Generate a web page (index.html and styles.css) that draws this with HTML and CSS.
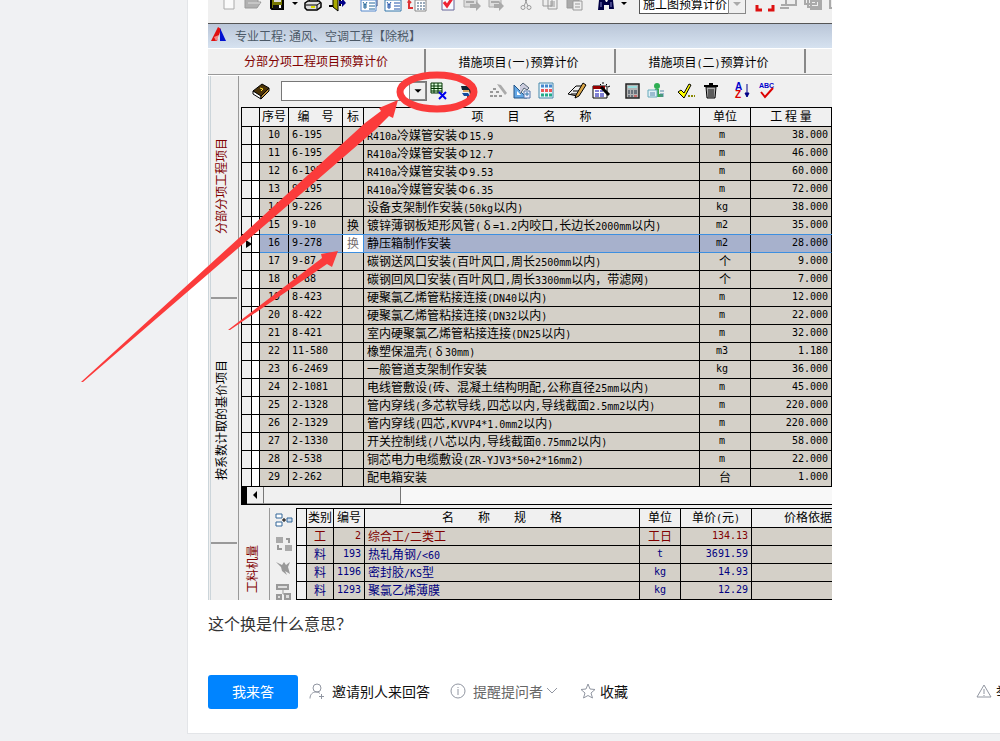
FILE: index.html
```html
<!DOCTYPE html>
<html lang="zh-CN">
<head>
<meta charset="utf-8">
<title>这个换是什么意思？</title>
<link rel="stylesheet" href="styles.css">
</head>
<body>
<div class="page">
<main class="card">
<section class="app" aria-label="预算软件">
  <div class="topbar">
    <div class="group">
      <button class="tool" aria-label="新建"><svg viewBox="0 0 20 18"><path d="M5 1h10v14H5z" fill="#fafafa" stroke="#aaa"/></svg></button>
      <button class="tool" aria-label="打开"><svg viewBox="0 0 20 18"><path d="M2 14V3h6l2 2h5v3h3l-4 6z" fill="#b0b0b0" stroke="#999"/><path d="M5 9h12" stroke="#ddd"/></svg></button>
      <button class="tool" aria-label="保存"><svg viewBox="0 0 20 18"><path d="M4 1h12v14H5l-1-1z" fill="#777700" stroke="#000" stroke-width="2"/><path d="M7 1h7v7H7z" fill="#ddd"/><path d="M6 11h9v4H6z" fill="#111"/><path d="M12 11h2v3h-2z" fill="#fff"/></svg></button>
      <button class="drop" aria-label="保存选项"><svg viewBox="0 0 12 18"><path d="M3 9h6l-3 3z"/></svg></button>
      <button class="tool" aria-label="打印"><svg viewBox="0 0 20 18"><path d="M6 8l2-7h8l-2 7z" fill="#fff" stroke="#000"/><path d="M2 9l3-2h11l2 2v4l-4 3H4l-2-2z" fill="#ddd" stroke="#000" stroke-width="1.500"/><path d="M3 11h11l3-2M14 11v4" stroke="#000" fill="none"/><path d="M8 13h4" stroke="#dd0" stroke-width="2"/></svg></button>
      <button class="tool" aria-label="退出"><svg viewBox="0 0 20 18"><path d="M2 12h5M13 12V2" fill="none" stroke="#000" stroke-width="2"/><path d="M6 1l5 3v13l-5-4z" fill="#aa0" stroke="#000"/><path d="M12 7h3V4l4 5-4 4v-3h-3z" fill="#008"/></svg></button>
    </div>
    <div class="group gap-l">
      <button class="tool" aria-label="计价"><svg viewBox="0 0 20 18"><path d="M6 0h12v12H6z" fill="#e8f1fa" stroke="#347"/><path d="M2 6h15v11H2z" fill="#fff" stroke="#58c"/><path d="M4 8l2 3 2-3M4 11h4M4 13h4M6 11v4M10 9h6M10 12h6M10 15h6" fill="none" stroke="#269"/></svg></button>
      <button class="tool" aria-label="取费"><svg viewBox="0 0 20 18"><path d="M3 0h15v6H3z" fill="#f1bd58" stroke="#a63"/><path d="M2 6h16v11H2z" fill="#fff" stroke="#37a"/><path d="M4 8l2 3 2-3M4 11h4M4 13h4M6 11v4M11 9h6M11 12h6M11 15h6" fill="none" stroke="#25a"/></svg></button>
      <button class="tool" aria-label="调整"><svg viewBox="0 0 20 18"><path d="M8 6h11v11H8z" fill="#fff" stroke="#888"/><path d="M10 9h2m1 0h2m1 0h2M10 12h2m1 0h2m1 0h2M10 15h2m1 0h2m1 0h2" stroke="#9ab" stroke-width="2"/><path d="M2 8v6h4M1 9l1-2 2 2" fill="none" stroke="#d33" stroke-width="2"/><path d="M5 1h10v4H5z" fill="#e98"/></svg></button>
    </div>
    <div class="group gap-m">
      <button class="tool" aria-label="检查"><svg viewBox="0 0 20 18"><path d="M4 2h12v14H4z" fill="#f7faff" stroke="#669"/><path d="M6 8l3 4 6-9" fill="none" stroke="#e23" stroke-width="3"/></svg></button>
      <button class="tool" aria-label="导入"><svg viewBox="0 0 20 18"><path d="M2 1h13v12H2z" fill="#ddd" stroke="#aaa"/><path d="M4 5h8M4 8h8" stroke="#aaa" stroke-width="2"/><path d="M8 10h6V7l5 5-5 5v-3H8z" fill="#aaa"/></svg></button>
      <button class="tool" aria-label="导出"><svg viewBox="0 0 20 18"><path d="M3 1h12v12H3z" fill="#ddd" stroke="#aaa"/><path d="M5 5h8M5 8h8" stroke="#aaa" stroke-width="2"/><path d="M8 10h5V7l5 5-5 5v-3H8z" fill="#aaa"/></svg></button>
    </div>
    <div class="group gap-s">
      <button class="tool" aria-label="剪切"><svg viewBox="0 0 20 18"><path d="M7 1l5 11M13 1L8 12" stroke="#999" fill="none"/><circle cx="7" cy="13.500" r="2" fill="none" stroke="#999"/><circle cx="13" cy="13.500" r="2" fill="none" stroke="#999"/></svg></button>
      <button class="tool" aria-label="复制"><svg viewBox="0 0 20 18"><path d="M3 2h9v10H3zM8 5h9v10H8z" fill="#eee" stroke="#999"/><path d="M10 8h5M10 10h5M10 12h5" stroke="#999"/></svg></button>
      <button class="tool" aria-label="粘贴"><svg viewBox="0 0 20 18"><path d="M3 1h12v13H3z" fill="#aaa" stroke="#999"/><path d="M9 7h9v9H9z" fill="#eee" stroke="#999"/><path d="M11 10h5M11 13h5" stroke="#999"/></svg></button>
    </div>
    <div class="group gap-l">
      <button class="tool" aria-label="查找"><svg viewBox="0 0 20 18"><path d="M5 1h3v5H5zM12 1h3v5h-3zM3 6h6l1 2h1l1-2h5l1 9h-5v-4h-5v5H2z" fill="#004"/><path d="M5 8v5M15 8v5" stroke="#88c"/></svg></button>
      <button class="drop" aria-label="查找选项"><svg viewBox="0 0 12 18"><path d="M3 9h6l-3 3z"/></svg></button>
    </div>
    <select class="mode" aria-label="计价方式"><option>施工图预算计价</option></select>
    <button class="mode-arrow" aria-label="展开"><svg viewBox="0 0 12 18"><path d="M2 7h8l-4 4z" fill="#aaa"/></svg></button>
    <div class="group gap-m">
      <button class="tool" aria-label="全屏"><svg viewBox="0 0 20 18"><path d="M2 6V1h5M13 1h5v5M2 11v5h5M13 16h5v-5" fill="none" stroke="#d11" stroke-width="3"/></svg></button>
      <button class="tool" aria-label="窗口"><svg viewBox="0 0 20 18"><path d="M7 2h10v9H7z" fill="#eee" stroke="#aaa" stroke-width="2"/><path d="M1 14h9M2 11h6" stroke="#aaa" stroke-width="2"/></svg></button>
      <button class="tool" aria-label="层叠"><svg viewBox="0 0 20 18"><path d="M2 1h11v9H2zM5 4h11v9H5zM8 7h10v8H8z" fill="#eee" stroke="#aaa" stroke-width="2"/></svg></button>
      <button class="tool" aria-label="平铺"><svg viewBox="0 0 20 18"><path d="M3 3h12v11H3z" fill="#eee" stroke="#aaa" stroke-width="2"/></svg></button>
    </div>
  </div>
  <div class="titlebar">
    <svg class="logo" viewBox="0 0 16 16"><path d="M7 0l3 2-4 12H0z" fill="#e01010"/><path d="M9 1l6 13H9z" fill="#0010d0"/><path d="M3 10l5-2v3l-3 3z" fill="#fff" opacity=".5"/></svg>
    <span>专业工程: 通风、空调工程【除税】</span>
  </div>
  <div class="tabs">
    <button class="tab tab-first active">分部分项工程项目预算计价</button>
    <button class="tab">措施项目<span class="l">(</span>一<span class="l">)</span>预算计价</button>
    <button class="tab">措施项目<span class="l">(</span>二<span class="l">)</span>预算计价</button>
  </div>
  <div class="workspace">
    <div class="rail">
      <button class="vtab vtab-a active"><span class="vert">分部分项工程项目</span></button>
      <button class="vtab vtab-b"><span class="vert">按系数计取的基价项目</span></button>
    </div>
    <div class="content">
      <div class="toolbar">
        <button class="tool" aria-label="定额"><svg viewBox="0 0 20 18"><path d="M2 9l9-7 7 4-8 9z" fill="#4a3208" stroke="#000"/><path d="M2 9v3l8 5v-3z" fill="#fff" stroke="#000"/><path d="M10 14l8-8v3l-8 8z" fill="#b98b36" stroke="#000"/><path d="M9 6l3 1-2 2" fill="none" stroke="#fd3"/></svg></button>
        <div class="combo"><input type="text" aria-label="定额编号"><button aria-label="展开"><svg viewBox="0 0 12 18"><path d="M2 7h8l-4 4z"/></svg></button></div>
        <button class="tool" aria-label="删除行"><svg viewBox="0 0 20 18"><path d="M2 1h11v10H2z" fill="#dfd" stroke="#030"/><path d="M2 4h11M2 6.500h11M2 9h11M5 1v10M9 1v10" stroke="#030"/><path d="M10 10l7 7M17 10l-7 7" stroke="#00e" stroke-width="2"/></svg></button>
        <button class="tool gap-xs" aria-label="换算"><svg viewBox="0 0 20 18"><path d="M4 4h6l4 2v2H5z" fill="#123"/><path d="M6 8h6v2H6z" fill="#d9a860"/><path d="M5 11h6l2 3H7z" fill="#124a9c"/><path d="M12 8l4-1v3l-3 3z" fill="#111"/><path d="M10 14h4v2h-4z" fill="#a22"/></svg></button>
        <button class="tool gap-m" aria-label="工具"><svg viewBox="0 0 20 18"><path d="M9 2l4 1 6 8-2 2-6-8z" fill="#aaa"/><path d="M2 14h3m1 0h3M2 10h3m3 0h3M5 7h3M11 14h3" stroke="#999" stroke-width="2"/></svg></button>
        <button class="tool" aria-label="设置"><svg viewBox="0 0 20 18"><path d="M2 3v13h13z" fill="#64a7e5" stroke="#258"/><path d="M5 9v4h4z" fill="#fff"/><path d="M8 4l3-3 6 5-2 2-3-2-4 6" fill="#ccd" stroke="#567"/><path d="M12 9h6v7h-6z" fill="#eef" stroke="#57a"/><path d="M13 12h4M15 10v4" stroke="#37a"/></svg></button>
        <button class="tool" aria-label="表格"><svg viewBox="0 0 20 18"><path d="M3 1h14v15H3z" fill="#eef6ff" stroke="#48a"/><path d="M5 4h3m1 0h3m1 0h3" stroke="#48c" stroke-width="3"/><path d="M5 8.500h3m1 0h3m1 0h3" stroke="#e55" stroke-width="3"/><path d="M5 13h3m1 0h3m1 0h3" stroke="#2a8" stroke-width="3"/></svg></button>
        <button class="tool gap-m" aria-label="编辑"><svg viewBox="0 0 20 18"><path d="M1 12l8-8h8l-7 10z" fill="#eee" stroke="#000"/><path d="M4 12h6M6 9h6" stroke="#000"/><path d="M9 13l7-12 3 2-7 11-4 2z" fill="#dba647" stroke="#000"/></svg></button>
        <button class="tool" aria-label="批量"><svg viewBox="0 0 20 18"><path d="M2 4h14v12H2z" fill="#fff" stroke="#000"/><path d="M2 4h12v3H2z" fill="#900"/><path d="M4 9h4m1 0h3M4 12h4m1 0h4M4 14h4m1 0h4" stroke="#00a"/><path d="M10 5l8 8" stroke="#000" stroke-width="3"/><path d="M9 2l1 1M12 0v2M15 2l1 1M17 5l2-1" stroke="#000"/></svg></button>
        <button class="tool gap-m" aria-label="计算器"><svg viewBox="0 0 20 18"><path d="M4 2h13v14H4z" fill="#b4b4b4" stroke="#222" stroke-width="1.500"/><path d="M6 4h9v2H6z" fill="#9dd"/><path d="M6 9h2m1 0h2m1 0h3M6 11h2m1 0h2m1 0h3M6 14h2m1 0h2" stroke="#234"/><path d="M12 14h3" stroke="#d22"/></svg></button>
        <button class="tool" aria-label="用户"><svg viewBox="0 0 20 18"><circle cx="11" cy="4" r="3" fill="#2eae53"/><path d="M9 7h4v5h4v3H7z" fill="#39a94f"/><path d="M2 8h9v7H2z" fill="#e1f0f7" stroke="#6ab"/><path d="M4 11h5M4 13h5M14 9h4M14 12h4M14 14h4" stroke="#58a"/></svg></button>
        <button class="tool gap-s" aria-label="校验"><svg viewBox="0 0 20 18"><path d="M2 10l3-2 3 3 5-9 2 1-7 13z" fill="#ff0" stroke="#000"/><path d="M12 14h2m1 0h2m1 0h1" stroke="#880" stroke-width="2"/></svg></button>
        <button class="tool" aria-label="删除"><svg viewBox="0 0 20 18"><path d="M6 5h10l-1 11H7z" fill="#aaa" stroke="#000"/><path d="M4 4h14M9 2h4" stroke="#000" stroke-width="2"/><path d="M9 7v8M11 7v8M13 7v8" stroke="#111"/></svg></button>
        <button class="tool gap-l" aria-label="排序"><svg viewBox="0 0 20 18"><text x="3" y="8" class="glyph az" fill="#00c">A</text><text x="3" y="16" class="glyph az" fill="#d00">Z</text><path d="M15 2v12M13 11l2 4 2-4z" fill="#008" stroke="#008"/></svg></button>
        <button class="tool" aria-label="拼写"><svg viewBox="0 0 20 18"><text x="3" y="6" class="glyph abc" fill="#00c">ABC</text><path d="M5 10l4 5 8-9" fill="none" stroke="#d00" stroke-width="2"/></svg></button>
      </div>
      <table class="grid items">
        <colgroup><col class="c10"><col class="c8"><col class="c29"><col class="c54"><col class="c21"><col><col class="c51"><col class="c81"></colgroup>
        <thead><tr><th colspan="2"></th><th>序号</th><th>编&emsp;号</th><th>标</th><th>项&emsp;&emsp;目&emsp;&emsp;名&emsp;&emsp;称</th><th>单位</th><th>工 程 量</th></tr></thead>
        <tbody>
        <tr><td></td><td></td><td>10</td><td>6-195</td><td></td><td><span class="l">R410a</span>冷媒管安装<span class="w">Φ</span><span class="l">15.9</span></td><td>m</td><td>38.000</td></tr>
        <tr><td></td><td></td><td>11</td><td>6-195</td><td></td><td><span class="l">R410a</span>冷媒管安装<span class="w">Φ</span><span class="l">12.7</span></td><td>m</td><td>46.000</td></tr>
        <tr><td></td><td></td><td>12</td><td>6-195</td><td></td><td><span class="l">R410a</span>冷媒管安装<span class="w">Φ</span><span class="l">9.53</span></td><td>m</td><td>60.000</td></tr>
        <tr><td></td><td></td><td>13</td><td>9-195</td><td></td><td><span class="l">R410a</span>冷媒管安装<span class="w">Φ</span><span class="l">6.35</span></td><td>m</td><td>72.000</td></tr>
        <tr><td></td><td></td><td>14</td><td>9-226</td><td></td><td>设备支架制作安装<span class="l">(50kg</span>以内<span class="l">)</span></td><td>kg</td><td>38.000</td></tr>
        <tr><td></td><td></td><td>15</td><td>9-10</td><td>换</td><td>镀锌薄钢板矩形风管<span class="l">(</span><span class="w">δ</span><span class="l">=1.2</span>内咬口<span class="l">,</span>长边长<span class="l">2000mm</span>以内<span class="l">)</span></td><td>m2</td><td>35.000</td></tr>
        <tr class="selected"><td><svg class="marker" viewBox="0 0 6 8"><path d="M0 0l6 4-6 4z"/></svg></td><td></td><td>16</td><td>9-278</td><td>换</td><td>静压箱制作安装</td><td>m2</td><td>28.000</td></tr>
        <tr><td></td><td></td><td>17</td><td>9-87</td><td></td><td>碳钢送风口安装<span class="l">(</span>百叶风口<span class="l">,</span>周长<span class="l">2500mm</span>以内<span class="l">)</span></td><td class="cjk">个</td><td>9.000</td></tr>
        <tr><td></td><td></td><td>18</td><td>9-88</td><td></td><td>碳钢回风口安装<span class="l">(</span>百叶风口<span class="l">,</span>周长<span class="l">3300mm</span>以内，带滤网<span class="l">)</span></td><td class="cjk">个</td><td>7.000</td></tr>
        <tr><td></td><td></td><td>19</td><td>8-423</td><td></td><td>硬聚氯乙烯管粘接连接<span class="l">(DN40</span>以内<span class="l">)</span></td><td>m</td><td>12.000</td></tr>
        <tr><td></td><td></td><td>20</td><td>8-422</td><td></td><td>硬聚氯乙烯管粘接连接<span class="l">(DN32</span>以内<span class="l">)</span></td><td>m</td><td>22.000</td></tr>
        <tr><td></td><td></td><td>21</td><td>8-421</td><td></td><td>室内硬聚氯乙烯管粘接连接<span class="l">(DN25</span>以内<span class="l">)</span></td><td>m</td><td>32.000</td></tr>
        <tr><td></td><td></td><td>22</td><td>11-580</td><td></td><td>橡塑保温壳<span class="l">(</span><span class="w">δ</span><span class="l">30mm)</span></td><td>m3</td><td>1.180</td></tr>
        <tr><td></td><td></td><td>23</td><td>6-2469</td><td></td><td>一般管道支架制作安装</td><td>kg</td><td>36.000</td></tr>
        <tr><td></td><td></td><td>24</td><td>2-1081</td><td></td><td>电线管敷设<span class="l">(</span>砖、混凝土结构明配<span class="l">,</span>公称直径<span class="l">25mm</span>以内<span class="l">)</span></td><td>m</td><td>45.000</td></tr>
        <tr><td></td><td></td><td>25</td><td>2-1328</td><td></td><td>管内穿线<span class="l">(</span>多芯软导线<span class="l">,</span>四芯以内<span class="l">,</span>导线截面<span class="l">2.5mm2</span>以内<span class="l">)</span></td><td>m</td><td>220.000</td></tr>
        <tr><td></td><td></td><td>26</td><td>2-1329</td><td></td><td>管内穿线<span class="l">(</span>四芯<span class="l">,KVVP4*1.0mm2</span>以内<span class="l">)</span></td><td>m</td><td>220.000</td></tr>
        <tr><td></td><td></td><td>27</td><td>2-1330</td><td></td><td>开关控制线<span class="l">(</span>八芯以内<span class="l">,</span>导线截面<span class="l">0.75mm2</span>以内<span class="l">)</span></td><td>m</td><td>58.000</td></tr>
        <tr><td></td><td></td><td>28</td><td>2-538</td><td></td><td>铜芯电力电缆敷设<span class="l">(ZR-YJV3*50+2*16mm2)</span></td><td>m</td><td>22.000</td></tr>
        <tr><td></td><td></td><td>29</td><td>2-262</td><td></td><td>配电箱安装</td><td class="cjk">台</td><td>1.000</td></tr>
        </tbody>
      </table>
      <div class="scroll"><button class="scroll-left" aria-label="向左滚动"><svg viewBox="0 0 6 8"><path d="M5 0v8L1 4z"/></svg></button><div class="thumb"></div></div>
      <div class="lower">
        <div class="lower-tab"><span class="vert">工料机量</span></div>
        <div class="lower-tools">
          <button aria-label="插入"><svg viewBox="0 0 18 16"><path d="M1 2h6v4H1zM1 10h6v4H1z" fill="#fff" stroke="#369"/><path d="M7 8h4M9 6v4" stroke="#000"/><path d="M12 6h5v4h-5z" fill="#cde" stroke="#369"/></svg></button>
          <button aria-label="替换"><svg viewBox="0 0 18 16"><path d="M1 1h7v6H1zM10 9h7v6h-7z" fill="#aaa"/><path d="M11 3h3v4M3 9v4h4" fill="none" stroke="#999" stroke-width="2"/></svg></button>
          <button aria-label="移除"><svg viewBox="0 0 18 16"><path d="M1 2l6 3 2-3 2 3 4-3-2 5 2 7-5-3 2 4-5-4-1-4z" fill="#999"/></svg></button>
          <button aria-label="层级"><svg viewBox="0 0 18 16"><path d="M2 1h11v4H2zM2 11h4v4H2zM10 10h5v5h-5z" fill="#ddd" stroke="#999" stroke-width="2"/><path d="M8 6v4h3" fill="none" stroke="#999"/></svg></button>
        </div>
        <table class="grid parts">
          <colgroup><col class="c10"><col class="c27"><col class="c31"><col><col class="c41"><col class="c71"><col class="c80"></colgroup>
          <thead><tr><th></th><th>类别</th><th>编号</th><th>名&emsp;&emsp;称&emsp;&emsp;规&emsp;&emsp;格</th><th>单位</th><th>单价<span class="l">(</span>元<span class="l">)</span></th><th>价格依据</th></tr></thead>
          <tbody>
          <tr class="labor"><td></td><td>工</td><td>2</td><td>综合工<span class="l">/</span>二类工</td><td class="cjk">工日</td><td>134.13</td><td></td></tr>
          <tr><td></td><td>料</td><td>193</td><td>热轧角钢<span class="l">/&lt;60</span></td><td>t</td><td>3691.59</td><td></td></tr>
          <tr><td></td><td>料</td><td>1196</td><td>密封胶<span class="l">/KS</span>型</td><td>kg</td><td>14.93</td><td></td></tr>
          <tr><td></td><td>料</td><td>1293</td><td>聚氯乙烯薄膜</td><td>kg</td><td>12.29</td><td></td></tr>
          </tbody>
        </table>
      </div>
    </div>
  </div>
</section>
<p class="question">这个换是什么意思？</p>
<div class="actions">
  <button class="answer">我来答</button>
  <a class="action invite" href="#"><svg viewBox="0 0 16 16"><circle cx="8" cy="5" r="4"/><path d="M1 15.500c0-4 2.500-6.500 6-6.500 1.500 0 3 .5 4 1.500M10 13.500h5M12.500 11v5"/></svg>邀请别人来回答</a>
  <button class="action remind"><svg viewBox="0 0 16 16"><circle cx="8" cy="8" r="7"/><path d="M8 6v6M8 4v1"/></svg>提醒提问者<svg class="chevron" viewBox="0 0 10 16"><path d="M0 5l5 5 5-5"/></svg></button>
  <button class="action favorite"><svg viewBox="0 0 16 16"><path d="M8 1l2 5 5 .5-4 3.500 1.500 5L8 12.500 3.500 15 5 10 1 6.500 6 6z"/></svg>收藏</button>
  <a class="action report" href="#"><svg viewBox="0 0 16 16"><path d="M8 2L1 14h14zM8 6v5M8 12v1"/></svg>举报</a>
</div>
</main>
<svg class="marks" viewBox="0 0 500 400" aria-hidden="true"><ellipse cx="437" cy="92" rx="37" ry="17" fill="none" stroke="#fb3b3b" stroke-width="7"/><path d="M81 382L365 123l16-12-2-3 19-8-5 18-4-2-14 14L83 382zM228 330l94-72-1-4 17-3-6 16-5-3-97 66z" fill="#fb3b3b"/></svg>
</div>
</body>
</html>
```
FILE: styles.css
```css
* { box-sizing: border-box; }
body {
  margin: 0;
  background: #f0f1f3;
  font-family: "Noto Sans CJK SC", sans-serif;
  overflow-x: hidden;
}
button, input, select {
  font: inherit;
  color: inherit;
  margin: 0;
  padding: 0;
  border: 0;
  border-radius: 0;
  background: none;
}
a { color: inherit; text-decoration: none; }
.page {
  position: relative;
  min-width: 1045px;
  padding: 0 0 8px 187px;
}
.marks {
  position: absolute;
  left: 0;
  top: 0;
  width: 500px;
  height: 400px;
  pointer-events: none;
}
.card {
  background: #fff;
  border: 1px solid #e3e5e8;
  border-top: 0;
  padding: 0 20px 24px;
}

/* Application window */
.app {
  max-width: 624px;
  background: #f0f0f0;
  font-size: 12px;
  line-height: 17px;
  color: #000;
  overflow: hidden;
}
.l {
  font-family: "DejaVu Sans Mono", monospace;
  font-size: 10px;
  line-height: 1;
}
.w {
  display: inline-block;
  width: 12px;
  line-height: 1;
  text-align: center;
}
.topbar {
  display: flex;
  align-items: flex-start;
  height: 24px;
  padding-left: 9px;
  border-bottom: 1px solid #555;
  overflow: hidden;
}
.group { display: flex; flex: none; }
.tool, .drop {
  display: flex;
  flex: none;
  justify-content: center;
  align-items: center;
  width: 24px;
  height: 18px;
}
.drop { width: 12px; }
.tool svg { width: 20px; height: 18px; }
.drop svg { width: 12px; height: 18px; }
.topbar .tool { margin-top: -6px; }
.topbar .drop { margin-top: -7px; }
.gap-xs { margin-left: 4px; }
.gap-s { margin-left: 6px; }
.gap-m { margin-left: 7px; }
.gap-l { margin-left: 8px; }
.mode {
  appearance: none;
  width: 90px;
  height: 20px;
  margin: -6px 0 0 9px;
  padding: 0 0 2px 3px;
  background: #fff;
  border: 1px solid #555;
  border-right: 0;
  line-height: 17px;
}
.mode-arrow {
  flex: none;
  width: 18px;
  height: 20px;
  margin-top: -6px;
  border: 1px solid #888;
}
.mode-arrow svg { display: block; width: 12px; height: 18px; margin: 0 auto; }
.titlebar {
  display: flex;
  align-items: center;
  height: 24px;
  gap: 8px;
  padding: 0 0 2px 3px;
  background: linear-gradient(#bac6d8, #d6e2f0);
  color: #4c5967;
}
.logo { width: 16px; height: 16px; }
.tabs {
  display: flex;
  height: 28px;
  padding-bottom: 1px;
  border-top: 1px solid #fff;
  border-bottom: 1px solid #fff;
  box-shadow: inset 0 -1px #999;
}
.tab {
  width: 190px;
  height: 24px;
  border-right: 2px solid #888;
  padding: 1px 3px 0 0;
}
.tab-first { width: 218px; padding: 0 0 2px; }
.active { color: #800000; }
.workspace { display: flex; }
.rail {
  flex: none;
  width: 31px;
  border-left: 3px double #ccd5da;
  border-right: 1px solid #999;
}
.vtab {
  display: flex;
  align-items: center;
  justify-content: center;
  width: 26px;
  padding-right: 8px;
  border-bottom: 2px solid #999;
}
.vtab-a { height: 223px; }
.vtab-b { height: 245px; }
.vert {
  writing-mode: vertical-rl;
  text-orientation: sideways;
  transform: rotate(180deg);
  white-space: nowrap;
}
.content { flex: 1; min-width: 0; }
.toolbar {
  display: flex;
  align-items: center;
  height: 31px;
  padding: 0 0 2px 10px;
}
.combo {
  display: flex;
  width: 146px;
  height: 20px;
  margin: 0 0 0 8px;
  background: #fff;
  border: 1px solid #777;
}
.combo input { flex: 1; min-width: 0; }
.combo button {
  width: 17px;
  background: #f0f0f0;
  border: 1px solid #888;
}
.combo svg { display: block; width: 12px; height: 16px; margin: 0 auto; }
.glyph { font-family: "Liberation Sans", sans-serif; font-weight: bold; }
.az { font-size: 10px; }
.abc { font-size: 7px; }

/* Data grids */
.grid {
  table-layout: fixed;
  border-spacing: 0;
  border-top: 1px solid #000;
  border-left: 1px solid #000;
  white-space: nowrap;
}
.items { width: calc(100% - 2px); margin-left: 2px; }
.grid th, .grid td {
  padding: 0 0 2px;
  border-right: 1px solid #000;
  border-bottom: 1px solid #000;
  overflow: hidden;
  text-align: center;
}
.grid th {
  height: 19px;
  background: #f0f0f0;
  font-weight: normal;
  line-height: 16px;
}
.grid td {
  height: 18px;
  background: #d4d0c8;
  line-height: 15px;
}
.c8 { width: 8px; }
.c10 { width: 10px; }
.c21 { width: 21px; }
.c27 { width: 27px; }
.c29 { width: 29px; }
.c31 { width: 31px; }
.c41 { width: 41px; }
.c51 { width: 51px; }
.c54 { width: 54px; }
.c71 { width: 71px; }
.c80 { width: 80px; }
.c81 { width: 81px; }
.grid td:first-child { background: #f0f0f0; }
.items td:nth-child(2) { background: #fff; }
.items td:nth-child(3), .items td:nth-child(4), .items td:nth-child(7), .items td:nth-child(8),
.parts td:nth-child(3), .parts td:nth-child(5), .parts td:nth-child(6) {
  font-family: "DejaVu Sans Mono", monospace;
  font-size: 10px;
}
.items td:nth-child(7) { padding-right: 6px; }
.items td:nth-child(4) { text-align: left; padding-left: 3px; }
.items td:nth-child(6), .parts td:nth-child(4) { text-align: left; padding-left: 3px; }
.items td:nth-child(8), .parts td:nth-child(6) { text-align: right; padding-right: 3px; }
.parts td:nth-child(3) { text-align: right; padding-right: 3px; }
.grid td.cjk.cjk.cjk { font-family: "Noto Sans CJK SC", sans-serif; font-size: 12px; padding-right: 0; }
.items .selected td:nth-child(n+3) {
  background: #a7b1cc;
  border-bottom-color: #3d8fe0;
  box-shadow: 0 -1px #3d8fe0;
}
.items .selected td { overflow: visible; }
.items .selected td:nth-child(5) {
  background: #fff;
  border-right-color: #3d8fe0;
  color: #776f70;
}
.marker { display: block; width: 6px; height: 8px; margin: 2px 0 0 4px; }
.scroll {
  display: flex;
  height: 18px;
  margin-left: 2px;
  border-left: 6px solid #000;
  border-bottom: 1px solid #000;
  background: #f8f8f8;
}
.scroll-left, .thumb {
  background: #f0f0f0;
  border-right: 1px solid #777;
  border-bottom: 1px solid #999;
}
.scroll-left { width: 17px; }
.scroll-left svg { display: block; width: 6px; height: 8px; margin: 0 auto; }
.thumb { width: 137px; }
.lower {
  display: flex;
  padding-top: 3px;
}
.lower-tab {
  display: flex;
  align-items: flex-end;
  justify-content: center;
  width: 31px;
  padding: 0 6px 7px 0;
  border-right: 1px solid #999;
  color: #800000;
}
.lower-tools {
  display: flex;
  flex-direction: column;
  gap: 8px;
  width: 26px;
  padding: 4px 0 0 5px;
}
.lower-tools button, .lower-tools svg { display: block; width: 18px; height: 16px; }
.parts { flex: 1; width: 0; }
.parts td { color: #000080; }
.parts .labor td { color: #800000; }
.parts th:last-child { text-align: right; }
.parts th:last-child, .parts td:last-child { border-right: 0; }

/* Question and actions */
.question {
  margin: 11px 0 40px;
  font-size: 16px;
  line-height: 24px;
  color: #333;
}
.actions {
  display: flex;
  align-items: center;
  font-size: 14px;
  line-height: 20px;
  color: #111;
}
.answer {
  width: 90px;
  height: 34px;
  margin-right: 11px;
  padding-bottom: 2px;
  border-radius: 3px;
  background: #0084ff;
  color: #fff;
}
.action {
  display: flex;
  align-items: center;
  gap: 7px;
  padding-bottom: 2px;
  white-space: nowrap;
}
.action svg {
  width: 16px;
  height: 16px;
  fill: none;
  stroke: #9196a1;
}
.action .chevron { width: 10px; margin-left: -3px; }
.remind { margin-left: 20px; color: #666; }
.favorite { margin-left: 23px; gap: 4px; }
.report { margin-left: auto; gap: 4px; }
```
